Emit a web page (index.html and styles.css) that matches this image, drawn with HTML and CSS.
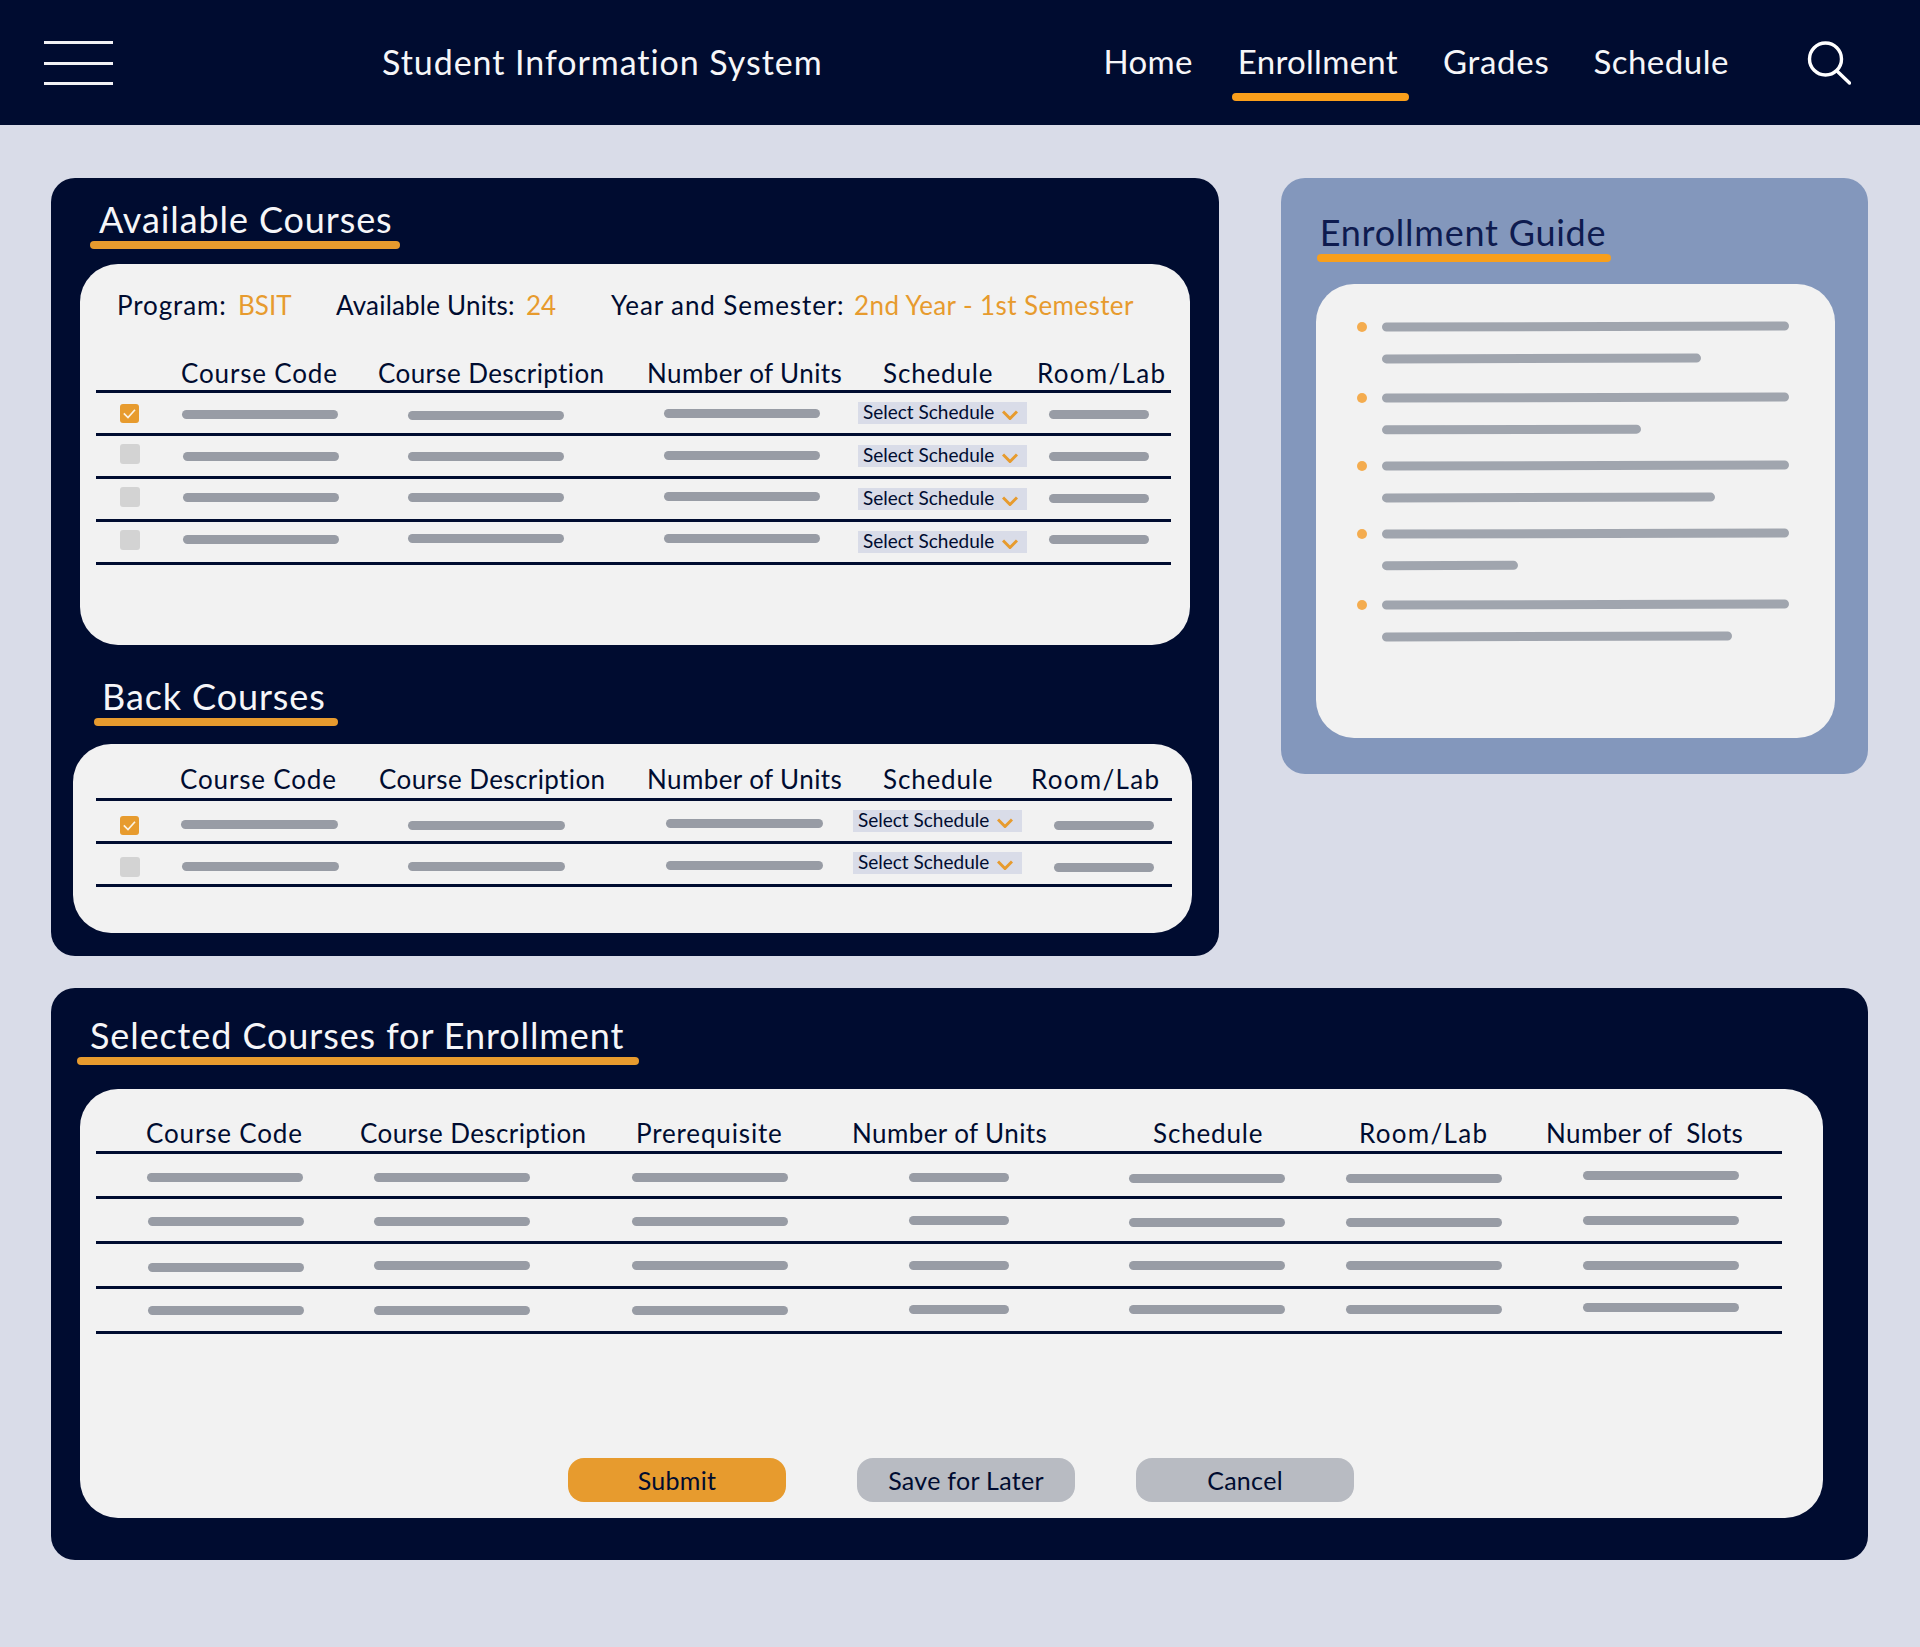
FILE: index.html
```html
<!DOCTYPE html>
<html lang="en">
<head>
<meta charset="utf-8">
<title>Student Information System</title>
<link rel="stylesheet" href="styles.css">
</head>
<body>
<header class="topbar">
  <div class="burger"><span></span><span></span><span></span></div>
  <div class="brand">Student Information System</div>
  <nav class="nav">
    <a class="nav-link nav-home">Home</a>
    <a class="nav-link nav-active">Enrollment</a>
    <a class="nav-link nav-grades">Grades</a>
    <a class="nav-link nav-sched">Schedule</a>
  </nav>
  <svg class="search" viewBox="0 0 44 44" fill="none" stroke="#fff" stroke-width="3.4" stroke-linecap="round"><circle cx="18.5" cy="18" r="16"/><path d="M30.5 30.5 42.5 42"/></svg>
</header>

<main class="page">
  <div class="upper">
    <section class="panel panel-left">
      <h2 class="title t-avail">Available Courses</h2>
      <div class="card card-avail">
        <div class="meta">
          <span class="m-wide">Program:</span><span class="accent">BSIT</span>
          <span class="m-tight">Available Units:</span><span class="accent">24</span>
          <span class="m-wide">Year and Semester:</span><span class="accent m-mid">2nd Year - 1st Semester</span>
        </div>
        <div class="thead thead-avail"><span class="th-w">Course Code</span><span>Course Description</span><span>Number of Units</span><span class="th-w">Schedule</span><span class="th-x">Room/Lab</span></div>
        <div class="row row-avail">
          <i class="check check-on"><svg viewBox="0 0 19 19" fill="none" stroke="#fbf3e4" stroke-width="1.7"><path d="M3.8 9.4 8 13.6 15 5.8"/></svg></i>
          <i class="bar long dn1"></i><i class="bar long dn2"></i><i class="bar long"></i>
          <div class="pick"><span>Select Schedule</span><svg viewBox="0 0 16 10" fill="none" stroke="#e79b2e" stroke-width="3"><path d="M1 1.5 8 8.5 15 1.5"/></svg></div>
          <i class="bar short dn1"></i>
        </div>
        <div class="row row-avail">
          <i class="check up2"></i>
          <i class="bar long ml1"></i><i class="bar long"></i><i class="bar long up1"></i>
          <div class="pick"><span>Select Schedule</span><svg viewBox="0 0 16 10" fill="none" stroke="#e79b2e" stroke-width="3"><path d="M1 1.5 8 8.5 15 1.5"/></svg></div>
          <i class="bar short"></i>
        </div>
        <div class="row row-avail">
          <i class="check up2"></i>
          <i class="bar long ml1 up2"></i><i class="bar long up2"></i><i class="bar long up3"></i>
          <div class="pick"><span>Select Schedule</span><svg viewBox="0 0 16 10" fill="none" stroke="#e79b2e" stroke-width="3"><path d="M1 1.5 8 8.5 15 1.5"/></svg></div>
          <i class="bar short up1"></i>
        </div>
        <div class="row row-avail">
          <i class="check up2"></i>
          <i class="bar long ml1 up3"></i><i class="bar long up4"></i><i class="bar long up4"></i>
          <div class="pick"><span>Select Schedule</span><svg viewBox="0 0 16 10" fill="none" stroke="#e79b2e" stroke-width="3"><path d="M1 1.5 8 8.5 15 1.5"/></svg></div>
          <i class="bar short up3"></i>
        </div>
      </div>

      <h2 class="title t-back">Back Courses</h2>
      <div class="card card-back">
        <div class="thead thead-back"><span class="th-w">Course Code</span><span>Course Description</span><span>Number of Units</span><span class="th-w">Schedule</span><span class="th-x">Room/Lab</span></div>
        <div class="row row-back">
          <i class="check check-on dn4"><svg viewBox="0 0 19 19" fill="none" stroke="#fbf3e4" stroke-width="1.7"><path d="M3.8 9.4 8 13.6 15 5.8"/></svg></i>
          <i class="bar wide dn3"></i><i class="bar wide dn4"></i><i class="bar wide dn2"></i>
          <div class="pick"><span>Select Schedule</span><svg viewBox="0 0 16 10" fill="none" stroke="#e79b2e" stroke-width="3"><path d="M1 1.5 8 8.5 15 1.5"/></svg></div>
          <i class="bar short dn4"></i>
        </div>
        <div class="row row-back">
          <i class="check dn3"></i>
          <i class="bar wide ml1 dn2"></i><i class="bar wide dn2"></i><i class="bar wide dn1"></i>
          <div class="pick up1"><span>Select Schedule</span><svg viewBox="0 0 16 10" fill="none" stroke="#e79b2e" stroke-width="3"><path d="M1 1.5 8 8.5 15 1.5"/></svg></div>
          <i class="bar short dn3"></i>
        </div>
      </div>
    </section>

    <aside class="panel panel-guide">
      <h2 class="title t-guide">Enrollment Guide</h2>
      <ul class="card guide-list">
        <li class="guide-item"><i class="dot"></i><div class="guide-lines"><i class="gbar"></i><i class="gbar g1"></i></div></li>
        <li class="guide-item gap-wide"><i class="dot"></i><div class="guide-lines"><i class="gbar"></i><i class="gbar g2"></i></div></li>
        <li class="guide-item"><i class="dot"></i><div class="guide-lines"><i class="gbar"></i><i class="gbar g3"></i></div></li>
        <li class="guide-item"><i class="dot"></i><div class="guide-lines"><i class="gbar"></i><i class="gbar g4"></i></div></li>
        <li class="guide-item gap-wide"><i class="dot"></i><div class="guide-lines"><i class="gbar"></i><i class="gbar g5"></i></div></li>
      </ul>
    </aside>
  </div>

  <section class="panel panel-selected">
    <h2 class="title t-selected">Selected Courses for Enrollment</h2>
    <div class="card card-selected">
      <div class="thead thead-sel"><span class="th-w">Course Code</span><span>Course Description</span><span class="th-w">Prerequisite</span><span>Number of Units</span><span class="th-w">Schedule</span><span class="th-x">Room/Lab</span><span>Number of&nbsp; Slots</span></div>
      <div class="row row-sel">
        <i class="bar long dn2"></i><i class="bar long dn2"></i><i class="bar long dn2"></i><i class="bar short dn2"></i><i class="bar long dn3"></i><i class="bar long dn3"></i><i class="bar long"></i>
      </div>
      <div class="row row-sel">
        <i class="bar long ml1 dn1"></i><i class="bar long dn1"></i><i class="bar long dn1"></i><i class="bar short"></i><i class="bar long dn2"></i><i class="bar long dn2"></i><i class="bar long"></i>
      </div>
      <div class="row row-sel">
        <i class="bar long ml1 dn2"></i><i class="bar long"></i><i class="bar long"></i><i class="bar short"></i><i class="bar long"></i><i class="bar long"></i><i class="bar long"></i>
      </div>
      <div class="row row-sel">
        <i class="bar long ml1"></i><i class="bar long"></i><i class="bar long"></i><i class="bar short up1"></i><i class="bar long up1"></i><i class="bar long up1"></i><i class="bar long up3"></i>
      </div>
      <div class="actions">
        <button class="btn btn-submit">Submit</button>
        <button class="btn btn-save">Save for Later</button>
        <button class="btn btn-cancel">Cancel</button>
      </div>
    </div>
  </section>
</main>
</body>
</html>
```
FILE: styles.css
```css
* { box-sizing: border-box; }
html, body { margin: 0; padding: 0; }
body {
  min-height: 1647px;
  background: #d9dce8;
  color: #000c30;
  font-family: "Lato", "Liberation Sans", sans-serif;
}
i { display: block; font-style: normal; }

/* top bar */
.topbar {
  position: relative;
  display: flex;
  align-items: flex-start;
  height: 125px;
  padding: 41px 0 0 44px;
  background: #000c30;
  color: #f6f6f8;
}
.burger { display: flex; flex-direction: column; gap: 17.5px; width: 69px; }
.burger span { display: block; height: 3px; background: #f1f1f4; }
.brand {
  margin: 1px 0 0 269px;
  font-size: 34px;
  line-height: 40px;
  letter-spacing: 0.95px;
  white-space: nowrap;
}
.nav { display: flex; margin-left: 281px; }
.nav-link { display: block; font-size: 33px; line-height: 40px; letter-spacing: 0.3px; white-space: nowrap; }
.nav-active { margin-left: 39px; padding: 0 11px 0 6px; }
.nav-active::after {
  content: "";
  display: block;
  height: 8px;
  margin: 12px -11px 0 -6px;
  border-radius: 4px;
  background: #fa9f1b;
}
.nav-grades { margin-left: 34px; letter-spacing: 0.7px; }
.nav-sched { margin-left: 44px; letter-spacing: 0.5px; }
.search { position: absolute; left: 1807px; top: 41px; width: 44px; height: 44px; }

/* layout */
.page { padding: 53px 52px 0 51px; }
.upper { display: flex; align-items: flex-start; gap: 62px; }
.panel { border-radius: 24px; background: #000c30; }
.panel-left { width: 1169px; padding: 19px 0 23px; }
.panel-guide { width: 588px; padding: 33px 0 36px; background: #8397bc; }
.panel-selected { width: 1817px; margin-top: 32px; padding: 25px 0 42px; }

/* section titles */
.title {
  margin: 0;
  font-size: 36px;
  line-height: 44px;
  font-weight: 400;
  letter-spacing: 0.9px;
  color: #f6f6f8;
  white-space: nowrap;
}
.title::after {
  content: "";
  display: block;
  height: 8px;
  border-radius: 4px;
  background: #e79b2e;
}
.t-avail { width: 310px; margin-left: 39px; padding-left: 9px; }
.t-avail::after { margin-left: -9px; }
.t-back { width: 244px; margin: 29px 0 0 43px; padding-left: 8px; }
.t-back::after { margin-left: -8px; }
.t-guide { width: 294px; margin-left: 36px; padding-left: 3px; line-height: 43px; letter-spacing: 0.75px; color: #0e1b4f; }
.t-guide::after { margin-left: -3px; background: #f89f1c; }
.t-selected { width: 562px; margin-left: 26px; padding-left: 13px; }
.t-selected::after { margin-left: -13px; }

/* white cards */
.card { border-radius: 38px; background: #f2f2f2; }
.card-avail { width: 1110px; margin: 15px 0 0 29px; padding: 22px 19px 80px 16px; }
.card-back { width: 1119px; margin: 18px 0 0 22px; padding: 16px 20px 46px 23px; }
.card-selected { width: 1743px; margin: 24px 0 0 29px; padding: 26px 41px 16px 16px; }

.meta {
  display: grid;
  grid-template-columns: 121px 98px 190px 85px 243px auto;
  height: 38px;
  margin: 0 0 31px 21px;
  font-size: 26px;
  line-height: 38px;
  white-space: nowrap;
}
.accent { color: #e79b2e; }
.m-wide { letter-spacing: 0.9px; }
.m-tight { letter-spacing: 0.2px; }
.m-mid { letter-spacing: 0.4px; }

/* tables */
.thead {
  display: grid;
  height: 38px;
  margin-bottom: 3px;
  font-size: 26px;
  line-height: 38px;
  letter-spacing: 0.4px;
  white-space: nowrap;
  box-shadow: 0 3px 0 #000c30;
}
.th-w { letter-spacing: 0.85px; }
.th-x { letter-spacing: 1.3px; }
.thead-avail { height: 35px; line-height: 37px; padding-left: 85px; grid-template-columns: 197px 269px 236px 154px auto; }
.thead-back { padding-left: 84px; grid-template-columns: 199px 268px 236px 148px auto; }
.thead-sel { height: 36px; line-height: 37px; padding-left: 50px; grid-template-columns: 214px 276px 216px 301px 206px 187px auto; }

.row {
  display: grid;
  align-items: center;
  justify-items: start;
  height: 43px;
  border-bottom: 3px solid #000c30;
}
.row-avail { grid-template-columns: 86px 226px 256px 194px 191px auto; }
.row-back { grid-template-columns: 85px 227px 258px 187px 201px auto; }
.row-sel { height: 45px; grid-template-columns: 278px 258px 277px 220px 217px 237px auto; }
.row-sel > .bar:first-child { margin-left: 51px; }
.row-sel > .bar.ml1:first-child { margin-left: 52px; }

.bar { height: 9px; border-radius: 4.5px; background: #989ca5; }
.long { width: 156px; }
.wide { width: 157px; }
.short { width: 100px; }
.ml1 { margin-left: 1px; }

.up1 { margin-bottom: 2px; }
.up2 { margin-bottom: 4px; }
.up3 { margin-bottom: 6px; }
.up4 { margin-bottom: 8px; }
.dn1 { margin-top: 2px; }
.dn2 { margin-top: 4px; }
.dn3 { margin-top: 6px; }
.dn4 { margin-top: 8px; }

.check {
  width: 20px;
  height: 20px;
  margin-left: 24px;
  border-radius: 3px;
  background: #d3d3d3;
}
.check-on { width: 19px; height: 19px; background: #e79b2e; }
.check svg { display: block; width: 19px; height: 19px; }

.pick {
  display: flex;
  align-items: center;
  width: 169px;
  height: 22px;
  padding-left: 5px;
  background: #d9dce8;
  font-size: 19px;
  line-height: 22px;
  white-space: nowrap;
}
.pick span { width: 139px; flex: none; padding-bottom: 2px; }
.pick svg { display: block; width: 16px; height: 10px; margin-top: 4px; }

/* guide */
.guide-list { list-style: none; height: 454px; margin: 22px 0 0 35px; width: 519px; padding: 38px 0 0 41px; }
.guide-item { display: flex; margin-bottom: 27px; }
.guide-item.gap-wide { padding-top: 3px; }
.dot { width: 10px; height: 10px; margin-right: 15px; border-radius: 50%; background: #f4ac4f; }
.guide-lines { display: flex; flex-direction: column; gap: 23px; }
.gbar { width: 407px; height: 9px; border-radius: 4.5px; background: #a0a5ae; transform: rotate(-0.15deg); }
.g1 { width: 319px; }
.g2 { width: 259px; }
.g3 { width: 333px; }
.g4 { width: 136px; }
.g5 { width: 350px; }

/* actions */
.actions { display: flex; margin: 124px 0 0 472px; }
.btn {
  width: 218px;
  height: 44px;
  padding: 0;
  border: 0;
  border-radius: 16px;
  background: #b8bbc2;
  color: #000c30;
  font: 400 25px/44px "Lato", "Liberation Sans", sans-serif;
  letter-spacing: 0.3px;
}
.btn-submit { background: #e79b2e; }
.btn-save { margin-left: 71px; }
.btn-cancel { margin-left: 61px; }
```
